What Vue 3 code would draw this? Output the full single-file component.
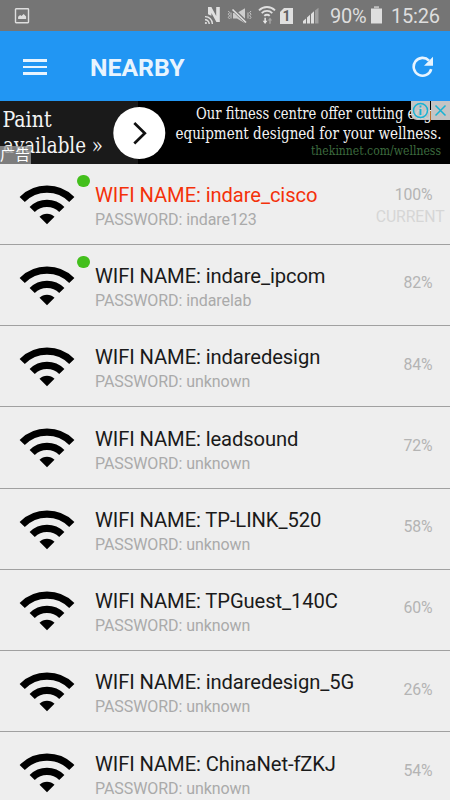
<script setup>
import { ref } from 'vue';

const networks = ref([
  { name: 'indare_cisco', password: 'indare123', signal: 100, known: true, current: true },
  { name: 'indare_ipcom', password: 'indarelab', signal: 82, known: true },
  { name: 'indaredesign', password: 'unknown', signal: 84 },
  { name: 'leadsound', password: 'unknown', signal: 72 },
  { name: 'TP-LINK_520', password: 'unknown', signal: 58 },
  { name: 'TPGuest_140C', password: 'unknown', signal: 60 },
  { name: 'indaredesign_5G', password: 'unknown', signal: 26 },
  { name: 'ChinaNet-fZKJ', password: 'unknown', signal: 54 },
]);
</script>

<template>
  <div class="screen">
    <header class="status-bar">
      <svg class="icon-picture" width="16" height="18" viewBox="0 0 16 18">
        <rect x="1.5" y="1.7" width="13" height="14" rx="0.6" fill="none" stroke="#dedede" stroke-width="1.4" />
        <path d="M4.1 12V9.8l2-1.8 1.4 1 2.2-2 2.4 2.4V12z" fill="#dedede" />
      </svg>

      <div class="status-right">
        <!-- nfc -->
        <svg class="icon-nfc" width="18" height="20" viewBox="0 0 18 20">
          <path d="M4 8.2V1h3.4l4.8 9V1h3.6v15h-3.4L7.4 7v2.8z" fill="#e0e0e0" />
          <g fill="none" stroke="#e0e0e0" stroke-width="1.4">
            <path d="M1 10.6a7.2 7.2 0 0 1 7.4 7.4M1 13.8a4 4 0 0 1 4.2 4.2" />
          </g>
          <circle cx="1.9" cy="17" r="1.1" fill="#e0e0e0" />
        </svg>
        <!-- vibrate, sound off -->
        <svg class="icon-mute" width="26" height="18" viewBox="0 0 26 18">
          <path d="M6 6h4l8-4.7v15l-8-4.8H6z" fill="#cdcdcd" />
          <path d="M5.5 2l14 13.5" stroke="#757575" stroke-width="3.4" />
          <path d="M5.5 2.5l13.5 13" stroke="#e0e0e0" stroke-width="1.6" />
          <path d="M1.3 4l1.3 1.6-1.3 1.6 1.3 1.6-1.3 1.6 1.3 1.6M4 5.5v6M24 4l-1.3 1.6L24 7.2l-1.3 1.6 1.3 1.6-1.3 1.6M21 5.5v6" fill="none" stroke="#c6c6c6" stroke-width="1" />
        </svg>
        <!-- wifi with traffic arrows -->
        <svg class="icon-wifi-small" width="18" height="20" viewBox="0 0 18 20">
          <g fill="none" stroke="#e0e0e0" stroke-width="1.8">
            <path d="M1 5.3a11.4 11.4 0 0 1 16 0M3.7 8.1a7.5 7.5 0 0 1 10.6 0M6.3 10.9a3.8 3.8 0 0 1 5.4 0" />
          </g>
          <path d="M6.4 12.8h1.5v3h1.5L7.1 19l-2.4-3.2h1.7z" fill="#e8e8e8" />
          <path d="M11.3 18.8h1.4v-3.2h1.4l-2.1-3-2.2 3h1.5z" fill="#a6a6a6" />
        </svg>
        <!-- sim card -->
        <div class="sim">1</div>
        <svg class="icon-signal" width="18" height="18" viewBox="0 0 18 18">
          <path d="M1 16.5V14l3-2.5v5zM5 16.5v-6l3-2.7v8.7zM9 16.5V7l3-2.7v12.2z" fill="#e0e0e0" />
          <path d="M13 16.5V3.5L16.5.7v15.8z" fill="#a0a0a0" />
        </svg>
        <span class="battery-level">90%</span>
        <svg class="icon-battery" width="13" height="20" viewBox="0 0 13 20">
          <path d="M1 3.5h11v15H1z" fill="#dedede" />
          <path d="M4 1.2h5v2.3H4z" fill="#bdbdbd" />
        </svg>
        <span class="clock">15:26</span>
      </div>
    </header>

    <nav class="toolbar">
      <button class="menu-btn" aria-label="Menu">
        <span></span><span></span><span></span>
      </button>
      <h1>NEARBY</h1>
      <button class="refresh-btn" aria-label="Refresh">
        <svg width="22" height="22" viewBox="0 0 22 22">
          <path d="M19.2 13.1A8.9 8.9 0 1 1 17 4.6" fill="none" stroke="#e8f4fe" stroke-width="2.6" />
          <path d="M21 0.8v9h-9z" fill="#e8f4fe" />
        </svg>
      </button>
    </nav>

    <section class="ad">
      <svg class="ad-art" width="450" height="63" viewBox="0 0 450 63">
        <rect width="450" height="63" fill="#000" />
        <rect width="138" height="63" fill="#1a1a1a" />
        <g class="ad-text" fill="#f4f4f4">
          <text x="2.5" y="25.7" font-size="21.5" textLength="49" lengthAdjust="spacingAndGlyphs">Paint</text>
          <text x="3" y="51.5" font-size="21.5" textLength="100" lengthAdjust="spacingAndGlyphs">available »</text>
          <text x="196" y="18" font-size="16" textLength="236" lengthAdjust="spacingAndGlyphs">Our fitness centre offer cutting edg</text>
          <text x="175.5" y="38" font-size="16" textLength="266" lengthAdjust="spacingAndGlyphs">equipment designed for your wellness.</text>
          <text x="311" y="54" font-size="12.5" fill="#3c6a3e" textLength="130" lengthAdjust="spacingAndGlyphs">thekinnet.com/wellness</text>
        </g>
        <circle cx="139.3" cy="32" r="26" fill="#fff" />
        <path d="M134.3 22l10.5 10.2-10.5 10.3" fill="none" stroke="#111" stroke-width="2.7" />
      </svg>
      <span class="ad-label">广告</span>
      <svg class="ad-choices" width="39" height="19" viewBox="0 0 39 19">
        <path d="M0 0h19v19H6a6 6 0 0 1-6-6zM20 0h19v19H20z" fill="#d0d0d0" fill-opacity="0.94" />
        <g fill="none" stroke="#18b2d3" stroke-width="1.5">
          <circle cx="9.5" cy="9.5" r="7" />
          <path d="M9.5 8v6M9.5 4.6v1.9" stroke-width="1.9" />
          <path d="M24.5 4.5l10 10M34.5 4.5l-10 10" />
        </g>
      </svg>
    </section>

    <ul class="list">
      <li v-for="net in networks" :key="net.name" class="row" :class="{ current: net.current }">
        <div class="wifi">
          <svg width="56" height="40" viewBox="0 0 56 40">
            <g fill="none" stroke="#000" stroke-width="7.3">
              <path d="M3.2 14.5a35 35 0 0 1 49.6 0" />
              <path d="M13.2 24.5a20.9 20.9 0 0 1 29.6 0" />
            </g>
            <path d="M28 39.3L20.5 31.8a10.6 10.6 0 0 1 15 0z" />
          </svg>
          <span v-if="net.known" class="dot"></span>
        </div>
        <div class="info">
          <p class="name">WIFI NAME: {{ net.name }}</p>
          <p class="password">PASSWORD: {{ net.password }}</p>
        </div>
        <div class="signal">
          <span>{{ net.signal }}%</span>
          <span v-if="net.current" class="tag">CURRENT</span>
        </div>
      </li>
    </ul>
  </div>
</template>

<style>
body {
  margin: 0;
  background: #eee;
  overflow: hidden;
}
</style>

<style scoped>
.screen {
  width: 450px;
  height: 800px;
  overflow: hidden;
  background: #eee;
  font-family: Roboto, "Noto Sans CJK SC", sans-serif;
}

.status-bar {
  display: flex;
  justify-content: space-between;
  height: 31px;
  padding: 0 10px 0 14px;
  box-sizing: border-box;
  background: #757575;
  color: #dedede;
}
.icon-picture { margin-top: 7px; }

.status-right {
  display: flex;
  align-items: flex-start;
}
.icon-nfc { margin: 6px 5px 0 0; }
.icon-mute { margin: 7px 5px 0 0; }
.icon-wifi-small { margin: 5px 4px 0 0; }
.sim {
  width: 13px;
  height: 16px;
  margin: 8px 9px 0 0;
  background: #e0e0e0;
  clip-path: polygon(4px 0, 100% 0, 100% 100%, 0 100%, 0 4px);
  color: #606060;
  font-size: 14px;
  font-weight: 700;
  line-height: 17px;
  text-align: center;
}
.icon-signal { margin: 7px 10px 0 0; }
.battery-level,
.clock {
  font-size: 20px;
  line-height: 33px;
}
.battery-level { width: 39.5px; letter-spacing: -0.2px; }
.icon-battery { margin: 5px 8.5px 0 0; }
.clock { width: 49px; letter-spacing: -0.2px; }

.toolbar {
  display: flex;
  align-items: center;
  height: 70px;
  padding: 2px 16px 0 23px;
  box-sizing: border-box;
  background: #2196f3;
}
.toolbar h1 {
  flex: 1;
  margin: 2px 0 0 43px;
  color: #e8f4fe;
  font-size: 24.8px;
  font-weight: 700;
  line-height: 30px;
}

button {
  padding: 0;
  border: none;
  background: none;
}
.menu-btn {
  display: flex;
  flex-direction: column;
  gap: 4px;
  width: 24px;
}
.menu-btn span {
  height: 2.4px;
  background: #e8f4fe;
}
.refresh-btn { height: 22px; }

.ad {
  position: relative;
  height: 62.6px;
  overflow: hidden;
}
.ad-art { display: block; }
.ad-text { font-family: "DejaVu Serif Condensed", "DejaVu Serif", serif; }
.ad-label {
  position: absolute;
  left: 0;
  bottom: 0;
  width: 31px;
  height: 18px;
  background: rgba(150, 150, 150, 0.8);
  color: #fff;
  font-size: 15px;
  line-height: 19px;
  white-space: nowrap;
}
.ad-choices {
  position: absolute;
  top: 0;
  right: 0;
}

.list {
  margin: 0;
  padding: 0;
  list-style: none;
}
.row {
  display: flex;
  height: 81.25px;
  box-sizing: border-box;
  border-bottom: 1px solid #a0a0a0;
}
.wifi {
  position: relative;
  width: 95px;
  padding: 21px 0 0 19.3px;
  box-sizing: border-box;
}
.wifi svg { display: block; }
.dot {
  position: absolute;
  top: 11px;
  left: 77px;
  width: 12.5px;
  height: 12.5px;
  border-radius: 50%;
  background: #43bf1c;
}
.info {
  flex: 1;
  padding-top: 18.2px;
}
.info p { margin: 0; white-space: nowrap; }
.name {
  color: #1a1a1a;
  font-size: 20.2px;
  line-height: 26px;
  letter-spacing: -0.1px;
}
.password {
  color: #aaa;
  font-size: 16px;
  line-height: 23.4px;
  letter-spacing: -0.07px;
}
.current .name { color: #f4310a; }
.signal {
  display: flex;
  flex-direction: column;
  align-items: flex-end;
  width: 80px;
  padding: 27.6px 17.5px 0 0;
  box-sizing: border-box;
  color: #b4b4b4;
  font-size: 15.8px;
  line-height: 22px;
  letter-spacing: -0.1px;
}
.current .signal { padding-top: 20px; }
.tag {
  margin-right: -12px;
  color: #d6d6d6;
}
</style>
